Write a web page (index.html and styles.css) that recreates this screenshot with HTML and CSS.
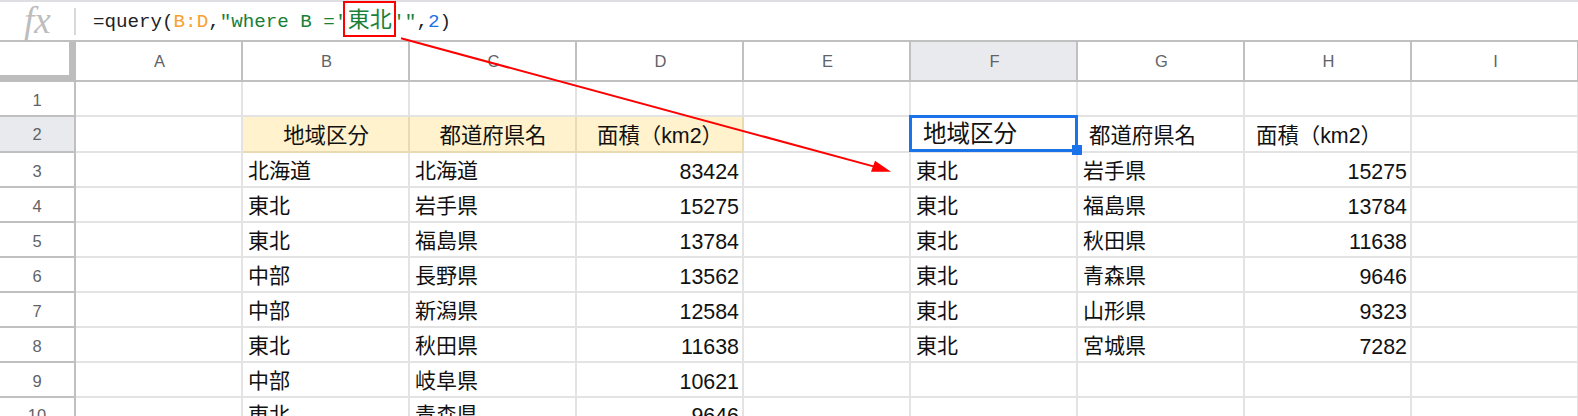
FILE: index.html
```html
<!DOCTYPE html>
<html lang="ja">
<head>
<meta charset="utf-8">
<title>Sheet</title>
<link rel="stylesheet" href="styles.css">
</head>
<body>
<div class="page">
  <div class="fbar">
    <div class="fx">fx</div>
    <div class="fsep"></div>
    <div class="formula">=query(<span class="rng">B:D</span>,<span class="str">"where B ='<span class="boxed">東北</span>'"</span>,<span class="num">2</span>)</div>
  </div>
  <div class="sheet">
    <div class="corner"></div><div class="ch">A</div><div class="ch">B</div><div class="ch">C</div><div class="ch">D</div><div class="ch">E</div><div class="ch sel">F</div><div class="ch">G</div><div class="ch">H</div><div class="ch">I</div>

    <div class="rh">1</div><div class="c"></div><div class="c"></div><div class="c"></div><div class="c"></div><div class="c"></div><div class="c"></div><div class="c"></div><div class="c"></div><div class="c"></div>

    <div class="rh sel">2</div><div class="c"></div><div class="c hd ctr">地域区分</div><div class="c hd ctr">都道府県名</div><div class="c hd ctr">面積（km2）</div><div class="c"></div><div class="c active">地域区分<span class="handle"></span></div><div class="c q">都道府県名</div><div class="c q">面積（km2）</div><div class="c"></div>

    <div class="rh">3</div><div class="c"></div><div class="c">北海道</div><div class="c">北海道</div><div class="c r">83424</div><div class="c"></div><div class="c">東北</div><div class="c">岩手県</div><div class="c r">15275</div><div class="c"></div>

    <div class="rh">4</div><div class="c"></div><div class="c">東北</div><div class="c">岩手県</div><div class="c r">15275</div><div class="c"></div><div class="c">東北</div><div class="c">福島県</div><div class="c r">13784</div><div class="c"></div>

    <div class="rh">5</div><div class="c"></div><div class="c">東北</div><div class="c">福島県</div><div class="c r">13784</div><div class="c"></div><div class="c">東北</div><div class="c">秋田県</div><div class="c r">11638</div><div class="c"></div>

    <div class="rh">6</div><div class="c"></div><div class="c">中部</div><div class="c">長野県</div><div class="c r">13562</div><div class="c"></div><div class="c">東北</div><div class="c">青森県</div><div class="c r">9646</div><div class="c"></div>

    <div class="rh">7</div><div class="c"></div><div class="c">中部</div><div class="c">新潟県</div><div class="c r">12584</div><div class="c"></div><div class="c">東北</div><div class="c">山形県</div><div class="c r">9323</div><div class="c"></div>

    <div class="rh">8</div><div class="c"></div><div class="c">東北</div><div class="c">秋田県</div><div class="c r">11638</div><div class="c"></div><div class="c">東北</div><div class="c">宮城県</div><div class="c r">7282</div><div class="c"></div>

    <div class="rh">9</div><div class="c"></div><div class="c">中部</div><div class="c">岐阜県</div><div class="c r">10621</div><div class="c"></div><div class="c"></div><div class="c"></div><div class="c"></div><div class="c"></div>

    <div class="rh">10</div><div class="c"></div><div class="c">東北</div><div class="c">青森県</div><div class="c r">9646</div><div class="c"></div><div class="c"></div><div class="c"></div><div class="c"></div><div class="c"></div>
  </div>
  <svg class="arrow" width="1578" height="416" viewBox="0 0 1578 416" aria-hidden="true">
    <line x1="401" y1="38.3" x2="878" y2="167.6" stroke="#ff0000" stroke-width="2"/>
    <polygon points="891,171.8 871,171.8 875,160.7" fill="#ff0000"/>
  </svg>
</div>
</body>
</html>
```

FILE: styles.css
```css
html, body { margin: 0; padding: 0; background: #fff; }
.page {
  position: relative;
  width: 1578px;
  height: 416px;
  overflow: hidden;
  font-family: "Liberation Sans", "Noto Sans CJK JP", sans-serif;
  color: #111;
}
.fbar {
  height: 38px;
  border-top: 2px solid #dfdfe3;
  display: flex;
  align-items: center;
}
.fx {
  width: 74px;
  box-sizing: border-box;
  padding-left: 24px;
  font-family: "Liberation Serif", serif;
  font-style: italic;
  font-size: 37px;
  line-height: 34px;
  color: #bdbdbd;
}
.fsep { width: 2px; height: 27px; background: #d9d9d9; }
.formula {
  margin-left: 17px;
  padding-bottom: 4px;
  font-family: "Liberation Mono", "Noto Sans CJK JP", monospace;
  font-size: 19.2px;
  line-height: 30px;
  color: #222;
  white-space: pre;
}
.rng { color: #f7a030; }
.str { color: #188038; }
.num { color: #1a73e8; }
.boxed {
  position: relative;
  display: inline-block;
  padding: 0 1.5px;
  font-family: "Noto Sans CJK JP", sans-serif;
  font-size: 22px;
  line-height: 30px;
}
.boxed::after {
  content: "";
  position: absolute;
  left: -3px;
  right: -3px;
  top: -1px;
  bottom: -5px;
  border: 2px solid #f00;
}
.sheet {
  display: grid;
  grid-template-columns: 76px repeat(9, 167px);
  grid-template-rows: 40px 35px 36px repeat(7, 35px);
  border-top: 2px solid #c0c0c0;
  width: 1578px;
  overflow: hidden;
}
.corner {
  background: #fff;
  border-right: 7px solid #bdbdbd;
  border-bottom: 7px solid #bdbdbd;
  box-sizing: border-box;
}
.ch, .rh {
  display: flex;
  align-items: center;
  justify-content: center;
  box-sizing: border-box;
  color: #5f6368;
  font-size: 16.5px;
}
.ch {
  padding: 1px 0 0 2px;
  border-right: 2px solid #c0c0c0;
  border-bottom: 2px solid #c0c0c0;
}
.rh {
  padding-top: 3px;
  border-right: 2px solid #c0c0c0;
  border-bottom: 2px solid #c0c0c0;
}
.rh.sel { padding-top: 0; }
.sel { background: #e8eaed; }
.c {
  position: relative;
  display: flex;
  align-items: center;
  box-sizing: border-box;
  padding: 0 4px 2px 5px;
  font-size: 21px;
  white-space: nowrap;
  border-right: 2px solid #e3e3e3;
  border-bottom: 2px solid #e3e3e3;
}
.r {
  justify-content: flex-end;
  padding-top: 5px;
  padding-right: 3px;
  padding-bottom: 0;
  font-size: 21.4px;
}
.ctr { justify-content: center; }
.hd {
  background: #fff2cc;
  border-color: #e8dbb3;
  font-size: 21.4px;
}
.q { padding-left: 11px; font-size: 21.4px; }
.active {
  padding-left: 12px;
  padding-bottom: 4px;
  font-size: 23.5px;
}
.active::before {
  content: "";
  position: absolute;
  left: -2px;
  top: -2px;
  right: -2px;
  bottom: -1px;
  border: 3px solid #1a73e8;
}
.handle {
  position: absolute;
  z-index: 2;
  right: -6px;
  bottom: -4px;
  width: 10px;
  height: 10px;
  background: #1a73e8;
}
.arrow { position: absolute; left: 0; top: 0; pointer-events: none; }
```
